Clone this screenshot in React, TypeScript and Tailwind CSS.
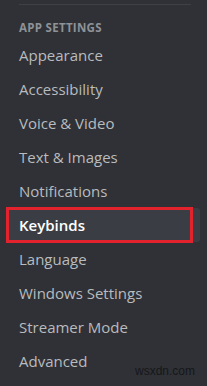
export default function App() {
  const items = [
    'Appearance',
    'Accessibility',
    'Voice & Video',
    'Text & Images',
    'Notifications',
    'Keybinds',
    'Language',
    'Windows Settings',
    'Streamer Mode',
    'Advanced',
  ];
  return (
    <div className="relative w-[207px] h-[386px] bg-[#2f3136] overflow-hidden font-['Open_Sans',sans-serif]">
      <div className="pt-[4px] px-[19px] pr-[16px]">
        <div className="h-px bg-[#3e4046]" />
      </div>
      <div className="pl-[19px] mt-[17px] h-[16px] text-[11.5px] font-bold tracking-[0.3px] text-[#8e9297] leading-[12px]">
        APP SETTINGS
      </div>
      <div className="flex flex-col">
        {items.map((item) =>
          item === 'Keybinds' ? (
            <div key={item} className="relative h-[34px] ml-[9px] mr-[7px] flex items-center">
              <div className="absolute inset-y-0 left-0 right-0 bg-[#3b3d44] rounded-[3px]" />
              <div className="absolute -inset-y-[1px] -left-[3px] right-[7px] border-[3px] border-[#e2232e]" />
              <span className="relative pl-[10px] text-[15px] font-semibold text-white">{item}</span>
            </div>
          ) : (
            <div key={item} className="h-[34px] pl-[19px] flex items-center text-[15px] text-[#b9bbbe]">
              {item}
            </div>
          )
        )}
      </div>
      <div className="absolute right-[12px] bottom-[6px] text-[12px] text-[#16171a] font-['Liberation_Sans',sans-serif]">
        wsxdn.com
      </div>
    </div>
  );
}
